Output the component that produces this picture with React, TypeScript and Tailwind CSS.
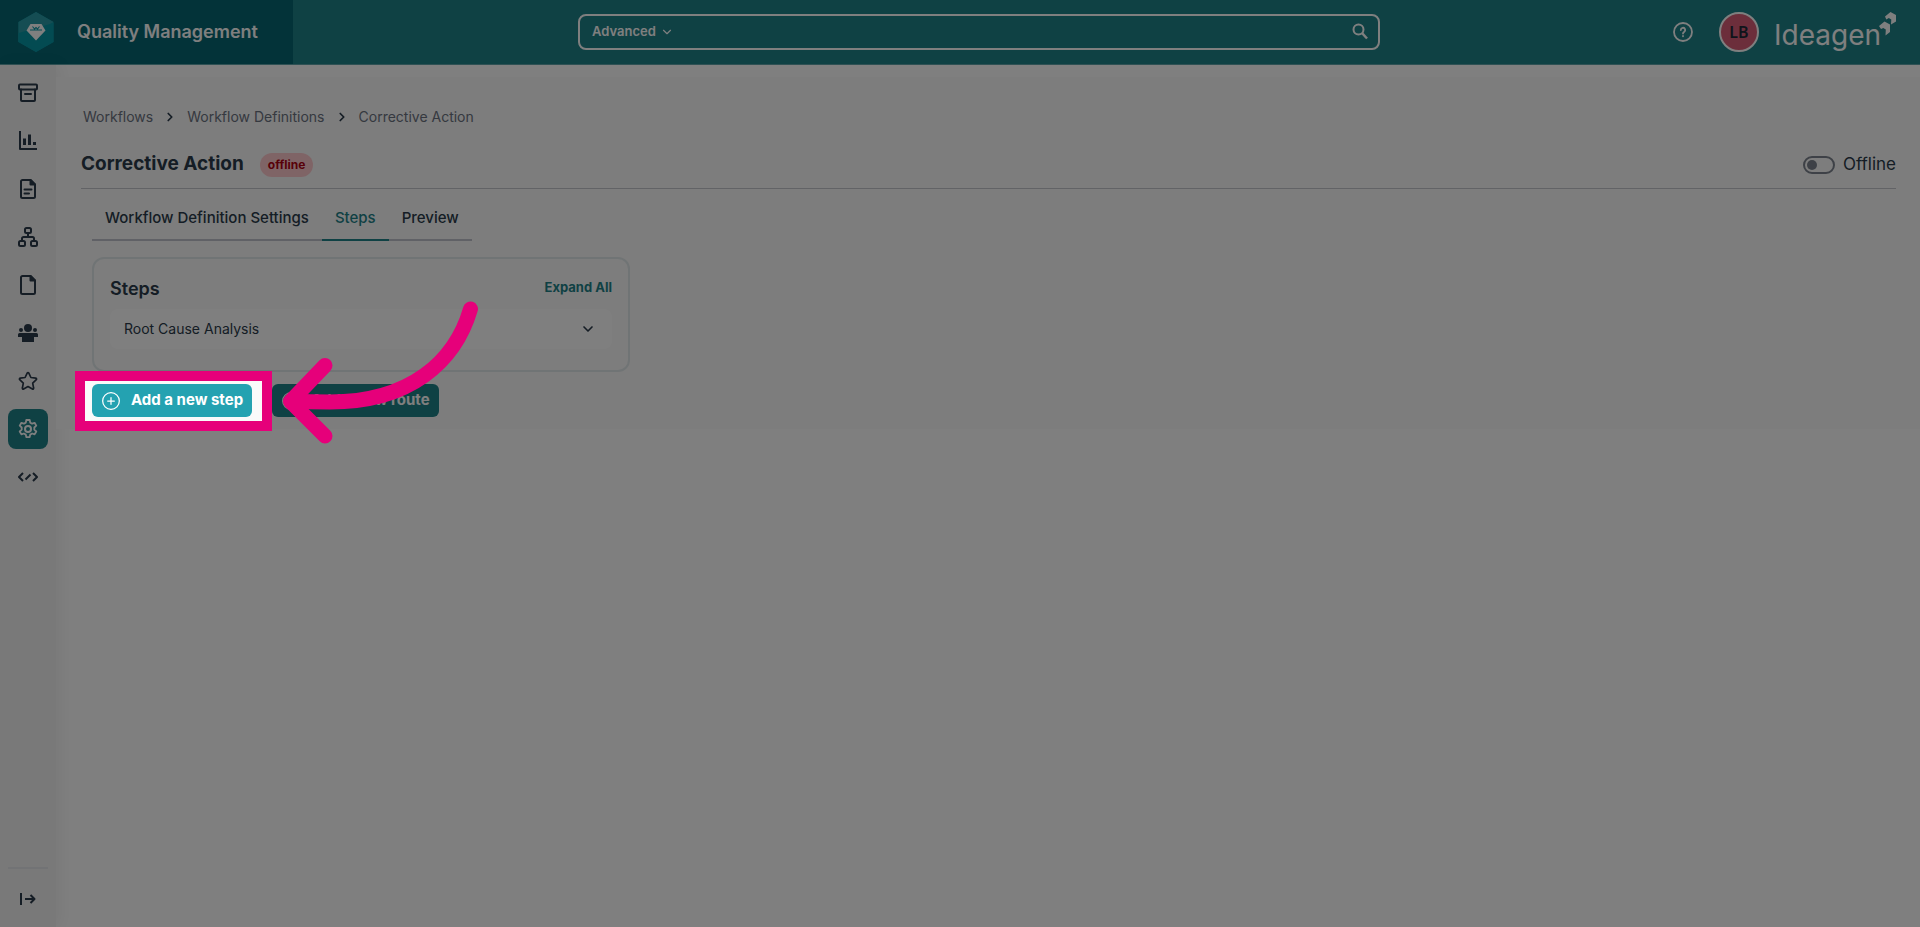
import type { ReactNode } from 'react';
import { ChevronDown, ChevronRight, CirclePlus } from 'lucide-react';

type NavItem = { label: string; icon: ReactNode; active?: boolean };

const stroke = { fill: 'none', stroke: 'currentColor', strokeWidth: 2, strokeLinecap: 'round', strokeLinejoin: 'round' } as const;

function Icon({ children }: { children: ReactNode }) {
  return (
    <svg width="20" height="20" viewBox="0 0 20 20" aria-hidden="true" {...stroke}>
      {children}
    </svg>
  );
}

const navItems: NavItem[] = [
  {
    label: 'Records',
    icon: (
      <Icon>
        <rect x="1" y="1.5" width="18" height="5" rx="1" />
        <path d="M3 6.5V17a1 1 0 0 0 1 1h12a1 1 0 0 0 1-1V6.5M7 11h6" />
      </Icon>
    ),
  },
  {
    label: 'Reports',
    icon: (
      <Icon>
        <path d="M2 1v17h16" strokeLinecap="square" />
        <path d="M6.5 7.5V14M11.5 3.5V14M16.5 11V14" strokeWidth="3" strokeLinecap="butt" />
      </Icon>
    ),
  },
  {
    label: 'Documents',
    icon: (
      <Icon>
        <path d="M12.5 1h-8A1.5 1.5 0 0 0 3 2.5v15A1.5 1.5 0 0 0 4.5 19h11a1.5 1.5 0 0 0 1.5-1.5v-12z" />
        <path d="M12.5 1v4.5H17z" fill="currentColor" />
        <path d="M6.5 10.5h7M6.5 14.5H11" />
      </Icon>
    ),
  },
  {
    label: 'Hierarchy',
    icon: (
      <Icon>
        <rect x="7" y="1" width="6" height="5" rx="1.5" />
        <rect x="1" y="14" width="6" height="5" rx="1.5" />
        <rect x="13" y="14" width="6" height="5" rx="1.5" />
        <path d="M10 6v4M4 14v-2.5A1.5 1.5 0 0 1 5.5 10h9a1.5 1.5 0 0 1 1.5 1.5V14" />
      </Icon>
    ),
  },
  {
    label: 'Files',
    icon: (
      <Icon>
        <path d="M12.5 1h-8A1.5 1.5 0 0 0 3 2.5v15A1.5 1.5 0 0 0 4.5 19h11a1.5 1.5 0 0 0 1.5-1.5v-12z" />
        <path d="M12.5 1v4.5H17z" fill="currentColor" />
      </Icon>
    ),
  },
  {
    label: 'People',
    icon: (
      <svg width="20" height="20" viewBox="0 0 20 20" fill="currentColor" aria-hidden="true">
        <circle cx="10" cy="5" r="4" />
        <circle cx="3" cy="7" r="2" />
        <circle cx="17" cy="7" r="2" />
        <path d="M0 14v-2.5A1.5 1.5 0 0 1 1.5 10h17a1.5 1.5 0 0 1 1.5 1.5V14h-4v5H4v-5z" />
      </svg>
    ),
  },
  {
    label: 'Favourites',
    icon: (
      <Icon>
        <path
          strokeWidth="1.7"
          d="M9.3 1.9a.8.8 0 0 1 1.4 0l2.2 4.6 4.9.7a.8.8 0 0 1 .5 1.4l-3.6 3.5.9 5a.8.8 0 0 1-1.2.9L10 15.600 5.600 18a.8.8 0 0 1-1.200-.9l.9-5L1.700 8.600a.8.8 0 0 1 .5-1.400l4.900-.7z"
        />
      </Icon>
    ),
  },
  {
    label: 'Settings',
    active: true,
    icon: (
      <Icon>
        <circle cx="10" cy="10" r="3" />
        <path d="M8.3 1h3.4l.5 2.6 1.9 1.1 2.5-.9 1.7 2.9-2 1.8v2.2l2 1.8-1.7 2.9-2.5-.9-1.9 1.1-.5 2.6H8.300l-.5-2.600-1.900-1.100-2.500.9-1.700-2.900 2-1.800V8.500l-2-1.800 1.700-2.900 2.500.9 1.900-1.100z" strokeWidth="1.8" />
      </Icon>
    ),
  },
  {
    label: 'Developer',
    icon: (
      <Icon>
        <path d="M5 6l-4 4 4 4M15 6l4 4-4 4M12.5 7.5l-5 5" strokeLinecap="butt" />
      </Icon>
    ),
  },
];

const tabs = ['Workflow Definition Settings', 'Steps', 'Preview'];

function Header() {
  return (
    <header className="flex h-[65px] items-center justify-between border-b border-[#5fa3a8] bg-[#1f8289] text-white">
      <a href="#" className="flex h-full w-[293px] items-center gap-[23px] bg-[#066672] pl-[18px]">
        <svg width="36" height="40" viewBox="0 0 36 40" aria-hidden="true">
          <path d="M18 0l17.5 10v20L18 40 .5 30V10z" fill="#0799a8" />
          <path d="M18 0l17.5 10L.5 30V10z" fill="#2a9ba6" />
          <path d="M18 40L.5 30V21l35-10v19z" fill="#0796a5" />
          <path d="M12.5 12h11l4 6.500L18 28.500 8.500 18.500z" fill="#fff" />
          <path d="M12 18h12M14.500 14.500l2 2.500 1.500-1.500 1.500 1.500 2-2.500" fill="none" stroke="#0796a5" strokeWidth="1.1" />
        </svg>
        <span className="text-lg font-semibold">Quality Management</span>
      </a>

      <form className="flex h-9 w-[42%] max-w-[802px] items-center rounded-lg border-2 border-white pr-2 pl-3">
        <button type="button" className="flex items-center gap-1 text-[13px] font-semibold">
          Advanced
          <ChevronDown size={14} />
        </button>
        <input type="search" aria-label="Search" className="min-w-0 flex-1 bg-transparent px-3 text-sm outline-none" />
        <button type="submit" aria-label="Search">
          <svg width="20" height="20" viewBox="0 0 20 20" aria-hidden="true" {...stroke}>
            <circle cx="8.5" cy="7.5" r="5" />
            <path d="M12 11l5 5.500" strokeLinecap="butt" strokeWidth="2.5" />
          </svg>
        </button>
      </form>

      <div className="flex items-center pr-6">
        <button aria-label="Help" className="p-2">
          <svg width="20" height="20" viewBox="0 0 20 20" aria-hidden="true" {...stroke} strokeWidth={1.8}>
            <circle cx="10" cy="10" r="9" />
            <path d="M7.8 8a2.200 2.200 0 1 1 3.300 1.900c-.8.5-1.100.8-1.100 1.700M10 14v.3" />
          </svg>
        </button>
        <button className="ml-[18px] size-10 rounded-full border-2 border-white bg-[#d95c76] font-['Noto_Sans',sans-serif] text-base font-semibold text-[#1f2937]">
          LB
        </button>
        <a href="#" className="ml-[15px] flex h-10 w-[122px] items-start justify-between">
          <span className="text-[28px] leading-[46px]">Ideagen</span>
          <svg width="20" height="24" viewBox="0 0 20 24" fill="#fff" aria-hidden="true" className="-ml-4">
            <path d="M9 4.500L14.500 0L20 3v6.500L15 12.500l.3-5-2.500-1.500-2.500 1.500z" />
            <path d="M3 14l5.500-4.500 5.500 3V20l-4.500 3.500.3-6L7.300 16 5 17z" />
          </svg>
        </a>
      </div>
    </header>
  );
}

function Sidebar() {
  return (
    <nav className="flex w-14 flex-col justify-between bg-[#f3f3f3] p-2 text-[#2b3a4a] shadow-[4px_0_16px_rgba(0,0,0,0.06)]">
      <div className="flex flex-col gap-2">
        {navItems.map((item) => (
          <a
            key={item.label}
            href="#"
            aria-label={item.label}
            className={
              item.active
                ? 'flex size-10 items-center justify-center rounded-lg bg-[#1f8289] text-white'
                : 'flex size-10 items-center justify-center rounded-lg'
            }
          >
            {item.icon}
          </a>
        ))}
      </div>
      <div className="border-t-2 border-[#e5e7eb] pt-[10px]">
        <button aria-label="Expand menu" className="flex size-10 items-center justify-center">
          <Icon>
            <path d="M3 4v12M7 10h9M12.5 6l4 4-4 4" strokeLinecap="butt" />
          </Icon>
        </button>
      </div>
    </nav>
  );
}

function Breadcrumbs() {
  return (
    <nav aria-label="Breadcrumb" className="flex h-6 items-center gap-[10px] pl-[2px] text-sm text-[#6b7280]">
      <a href="#">Workflows</a>
      <ChevronRight size={14} strokeWidth={3} className="text-[#2b3a4a]" />
      <a href="#">Workflow Definitions</a>
      <ChevronRight size={14} strokeWidth={3} className="text-[#2b3a4a]" />
      <span>Corrective Action</span>
    </nav>
  );
}

function StepsCard() {
  return (
    <section className="mt-4 h-[115px] w-[538px] rounded-xl border-2 border-[#e1e8ea] px-4 pt-4">
      <div className="flex items-start justify-between">
        <h2 className="text-lg leading-7 font-semibold">Steps</h2>
        <button className="text-[13px] leading-6 font-bold text-[#1f8289]">Expand All</button>
      </div>
      <button className="mt-[6px] flex h-10 w-full items-center justify-between rounded-lg bg-white pr-4 pl-[14px] text-sm">
        Root Cause Analysis
        <ChevronDown size={16} strokeWidth={2.5} />
      </button>
    </section>
  );
}

export default function App() {
  return (
    <div className="flex min-h-screen flex-col overflow-hidden bg-white font-[Inter,sans-serif] text-[#2b3a4a]">
      <Header />
      <div className="flex flex-1">
        <Sidebar />
        <div className="min-w-0 flex-1 pt-3">
          <main className="bg-[#fafafa] pt-7 pr-6 pb-3 pl-[25px]">
            <Breadcrumbs />
            <div className="mt-3 flex h-12 items-center justify-between border-b border-[#c4c6cc]">
              <div className="flex items-center gap-4">
                <h1 className="text-[19px] font-bold">Corrective Action</h1>
                <span className="flex h-6 items-center rounded-full bg-[#ffc9cd] px-2 text-xs font-bold text-[#b00012]">offline</span>
              </div>
              <label className="flex items-center gap-2 text-[17px]">
                <input type="checkbox" role="switch" className="peer sr-only" />
                <span className="flex h-[18px] w-8 items-center rounded-full border-2 border-[#7c838e] px-[2px]">
                  <span className="size-[10px] rounded-full bg-[#7c838e]" />
                </span>
                Offline
              </label>
            </div>

            <div className="pl-[11px]">
              <div role="tablist" className="mt-2 flex w-fit">
                {tabs.map((tab) => (
                  <button
                    key={tab}
                    role="tab"
                    aria-selected={tab === 'Steps'}
                    className={
                      tab === 'Steps'
                        ? 'h-11 border-b-2 border-[#1f8289] px-[13px] text-[15px] font-medium text-[#1f8289]'
                        : 'h-11 border-b-2 border-[#c1c3cd] px-[13px] text-[15px] font-medium'
                    }
                  >
                    {tab}
                  </button>
                ))}
              </div>

              <StepsCard />

              <div className="mt-3 flex gap-5 text-[15px] font-bold text-white">
                <div className="relative">
                  <button className="flex h-[33px] items-center gap-[10px] rounded-md bg-[#24a2b1] px-[9px]">
                    <CirclePlus size={20} strokeWidth={1.5} />
                    Add a new step
                  </button>
                  {/* Spotlight: everything outside the frame is dimmed */}
                  <div className="pointer-events-none absolute -top-[13px] -right-5 -bottom-[14px] -left-[17px] z-10 border-10 border-[#e6007a] shadow-[0_0_0_9999px_rgba(0,0,0,0.5)]" />
                  <svg
                    className="pointer-events-none absolute -top-[84px] left-[188px] z-20"
                    width="200"
                    height="150"
                    viewBox="280 300 200 150"
                    fill="none"
                    stroke="#e6007a"
                    strokeWidth="15"
                    strokeLinecap="round"
                    strokeLinejoin="round"
                    aria-hidden="true"
                  >
                    <path d="M470.5 309C455 362 410 402 330 402Q310 402 292 401" />
                    <path d="M325 365.5l-34.5 36L325 436" />
                  </svg>
                </div>
                <button className="flex h-[33px] items-center gap-[10px] rounded-md bg-[#1f8289] px-[9px]">
                  <CirclePlus size={20} strokeWidth={1.5} />
                  Add a new route
                </button>
              </div>
            </div>
          </main>
        </div>
      </div>
    </div>
  );
}
